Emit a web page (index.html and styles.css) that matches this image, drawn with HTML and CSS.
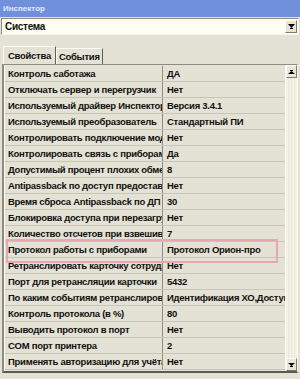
FILE: index.html
```html
<!DOCTYPE html>
<html>
<head>
<meta charset="utf-8">
<link rel="stylesheet" href="styles.css">
</head>
<body>
<div class="window">
  <div class="titlebar">Инспектор</div>
  <div class="combo">
    <span class="combo-text">Система</span>
    <span class="combo-btn"><svg width="7" height="5" viewBox="0 0 7 5"><path d="M0 0H7L3.5 4Z" fill="#000"/><rect x="2" y="4" width="3" height="1" fill="#000"/></svg></span>
  </div>
  <div class="tabs">
    <div class="tab active">Свойства</div>
    <div class="tab">События</div>
  </div>
  <div class="panel">
    <div class="grid">
      <div class="rows">
        <div class="row"><div class="k">Контроль саботажа</div><div class="v">ДА</div></div>
        <div class="row"><div class="k">Отключать сервер и перегрузчик</div><div class="v">Нет</div></div>
        <div class="row"><div class="k">Используемый драйвер Инспектора</div><div class="v">Версия 3.4.1</div></div>
        <div class="row"><div class="k">Используемый преобразователь</div><div class="v">Стандартный ПИ</div></div>
        <div class="row"><div class="k">Контролировать подключение модулей</div><div class="v">Нет</div></div>
        <div class="row"><div class="k">Контролировать связь с приборами</div><div class="v">Да</div></div>
        <div class="row"><div class="k">Допустимый процент плохих обменов</div><div class="v">8</div></div>
        <div class="row"><div class="k">Antipassback по доступ предоставлен</div><div class="v">Нет</div></div>
        <div class="row"><div class="k">Время сброса Antipassback по ДП</div><div class="v">30</div></div>
        <div class="row"><div class="k">Блокировка доступа при перезагрузке</div><div class="v">Нет</div></div>
        <div class="row"><div class="k">Количество отсчетов при взвешивании</div><div class="v">7</div></div>
        <div class="row"><div class="k">Протокол работы с приборами</div><div class="v">Протокол Орион-про</div></div>
        <div class="row"><div class="k">Ретранслировать карточку сотрудника</div><div class="v">Нет</div></div>
        <div class="row"><div class="k">Порт для ретрансляции карточки</div><div class="v">5432</div></div>
        <div class="row"><div class="k">По каким событиям ретранслировать</div><div class="v">Идентификация ХО,Доступ</div></div>
        <div class="row"><div class="k">Контроль протокола (в %)</div><div class="v">80</div></div>
        <div class="row"><div class="k">Выводить протокол в порт</div><div class="v">Нет</div></div>
        <div class="row"><div class="k">COM порт принтера</div><div class="v">2</div></div>
        <div class="row"><div class="k">Применять авторизацию для учёта</div><div class="v">Нет</div></div>
        <div class="highlight"></div>
      </div>
      <div class="scrollbar">
        <div class="sbtn"><svg width="7" height="4" viewBox="0 0 7 4"><rect x="2" y="0" width="3" height="1" fill="#000"/><path d="M0 4H7L3.5 1Z" fill="#000"/></svg></div>
        <div class="track"></div>
        <div class="sbtn"><svg width="7" height="4" viewBox="0 0 7 4"><path d="M0 0H7L3.5 3Z" fill="#000"/><rect x="2" y="3" width="3" height="1" fill="#000"/></svg></div>
      </div>
    </div>
  </div>
</div>
</body>
</html>
```

FILE: styles.css
```css
html, body {
  margin: 0;
  padding: 0;
}
body {
  width: 300px;
  height: 379px;
  overflow: hidden;
  background: #e3e2d4;
  font-family: "Liberation Sans", Arial, sans-serif;
  font-weight: bold;
  font-size: 9.5px;
  letter-spacing: -0.28px;
  color: #111;
}
.window {
  display: flex;
  flex-direction: column;
  width: 300px;
  height: 379px;
  overflow: hidden;
}
.titlebar {
  height: 17px;
  background: #7190dc;
  color: #e6eaff;
  font-size: 8px;
  line-height: 17px;
  padding-left: 3px;
  letter-spacing: 0;
}
.combo {
  margin: 1px 1px 0 1px;
  height: 15px;
  border-top: 1px solid #8c8c84;
  border-left: 1px solid #8c8c84;
  border-bottom: 1px solid #f6f6ec;
  border-right: 1px solid #f6f6ec;
  background: #fffef2;
  display: flex;
  align-items: center;
  justify-content: space-between;
}
.combo-text {
  padding-left: 3px;
  font-size: 10px;
}
.combo-btn {
  width: 10px;
  height: 11px;
  margin-right: 1px;
  background: #e6e5d8;
  border: 1px solid #fff;
  border-right-color: #7a7a72;
  border-bottom-color: #7a7a72;
  display: flex;
  align-items: center;
  justify-content: center;
}
.tabs {
  display: flex;
  padding: 12px 0 0 3px;
  height: 17px;
  align-items: flex-end;
}
.tab {
  height: 15px;
  line-height: 15px;
  padding: 0 2px;
  border-right: 1px solid #5e5e58;
  border-left: 1px solid #fbfbf3;
  border-top: 1px solid #fbfbf3;
  font-size: 9.5px;
}
.tab.active {
  height: 17px;
  line-height: 17px;
  padding: 0 4px;
}
.panel {
  flex: 1;
  min-height: 0;
  padding: 0 2px 6px 2px;
  display: flex;
}
.grid {
  flex: 1;
  min-width: 0;
  display: flex;
  border-top: 1px solid #8c8c84;
  border-left: 2px solid #8c8c84;
  border-bottom: 2px solid #5a5a54;
  border-right: 1px solid #fbfbf3;
  background: #e3e2d4;
}
.rows {
  flex: 1;
  min-width: 0;
  position: relative;
  border-left: 1px solid #fbfbf3;
  padding-top: 1px;
}
.row {
  display: flex;
  height: 15px;
  border-bottom: 1px solid #c6c6b8;
  line-height: 15px;
}
.k {
  width: 154px;
  flex: none;
  padding-left: 3px;
  border-right: 1px solid #8e8e86;
  white-space: nowrap;
  overflow: hidden;
}
.v {
  flex: 1;
  min-width: 0;
  padding-left: 4px;
  white-space: nowrap;
  overflow: hidden;
}
.highlight {
  position: absolute;
  left: 1px;
  top: 174px;
  width: 272px;
  height: 24px;
  border: 2px solid #eaa6b4;
  box-sizing: border-box;
}
.scrollbar {
  width: 11px;
  flex: none;
  display: flex;
  flex-direction: column;
  border-left: 1px solid #fbfbf3;
}
.sbtn {
  background: #e8e7da;
  border: 1px solid #fff;
  border-right-color: #7a7a72;
  border-bottom-color: #7a7a72;
  display: flex;
  align-items: center;
  justify-content: center;
  box-sizing: border-box;
  height: 13px;
}
.track {
  flex: 1;
  background: repeating-linear-gradient(90deg, #f4f2e4 0 2px, #e8e6d6 2px 3px);
}
```
